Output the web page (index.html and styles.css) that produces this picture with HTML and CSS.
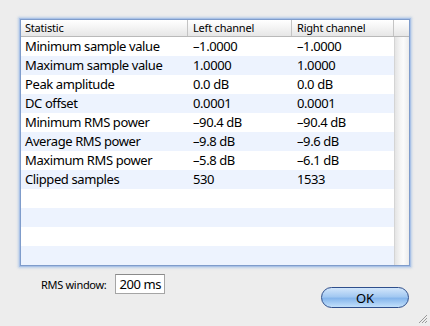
FILE: index.html
```html
<!DOCTYPE html>
<html lang="en">
<head>
  <meta charset="UTF-8">
  <title>Statistics</title>
  <link rel="stylesheet" href="styles.css">
</head>
<body>
  <div class="dialog">
    <div class="frame">
      <div class="head">
        <div class="hcell">Statistic</div>
        <div class="hcell">Left channel</div>
        <div class="hcell">Right channel</div>
        <div class="hcell"></div>
      </div>
      <div class="body">
        <div class="rows">
          <div class="row"><span>Minimum sample value</span><span>–1.0000</span><span>–1.0000</span></div>
          <div class="row"><span>Maximum sample value</span><span>1.0000</span><span>1.0000</span></div>
          <div class="row"><span>Peak amplitude</span><span>0.0 dB</span><span>0.0 dB</span></div>
          <div class="row"><span>DC offset</span><span>0.0001</span><span>0.0001</span></div>
          <div class="row"><span>Minimum RMS power</span><span>–90.4 dB</span><span>–90.4 dB</span></div>
          <div class="row"><span>Average RMS power</span><span>–9.8 dB</span><span>–9.6 dB</span></div>
          <div class="row"><span>Maximum RMS power</span><span>–5.8 dB</span><span>–6.1 dB</span></div>
          <div class="row"><span>Clipped samples</span><span>530</span><span>1533</span></div>
          <div class="row"></div>
          <div class="row"></div>
          <div class="row"></div>
          <div class="row"></div>
        </div>
        <div class="scrollbar"></div>
      </div>
    </div>

    <div class="footer">
      <label class="rms">RMS window:
        <span class="field">200 ms</span>
      </label>
      <button class="ok">OK</button>
    </div>

    <svg class="grip" width="12" height="12" viewBox="0 0 12 12">
      <path d="M11 3 L3 11 M11 6 L6 11 M11 9 L9 11" stroke="#9a9a9a" stroke-width="1" fill="none"/>
    </svg>
  </div>
</body>
</html>
```

FILE: styles.css
```css
body {
  margin: 0;
  background: #ededed;
  font-family: "Noto Sans", "DejaVu Sans", sans-serif;
  color: #000;
}

.dialog {
  position: relative;
  width: 430px;
  height: 326px;
  padding: 19px 0 0 20px;
  box-sizing: border-box;
}

.frame {
  width: 390px;
  border: 1px solid #7f9ccb;
  box-shadow: 0 0 0 1px #a9c1e6, 0 0 2px 2px rgba(140, 175, 225, 0.5);
  background: #fff;
  box-sizing: border-box;
}

.head {
  display: grid;
  grid-template-columns: 167px 104px 102px 1fr;
  height: 16px;
  background: linear-gradient(#ffffff, #f3f3f3 50%, #e6e6e6);
  border-bottom: 1px solid #b9b9b9;
}

.hcell {
  font-size: 11px;
  line-height: 16px;
  letter-spacing: -0.2px;
  padding-left: 5px;
  border-right: 1px solid #c4c4c4;
}

.hcell:first-child {
  padding-left: 4px;
}

.hcell:last-child {
  border-right: none;
}

.body {
  display: flex;
}

.rows {
  width: 373px;
}

.row {
  display: grid;
  grid-template-columns: 167px 104px 102px;
  height: 19px;
  font-size: 13px;
  line-height: 19px;
  letter-spacing: -0.4px;
}

.row:nth-child(even) {
  background: #edf3fe;
}

.row span {
  padding-left: 5px;
  white-space: nowrap;
}

.row span:first-child {
  padding-left: 4px;
}

.scrollbar {
  flex: 1;
  background: linear-gradient(90deg, #e4e4e4, #f6f6f6 40%, #fbfbfb 60%, #ececec);
  border-left: 1px solid #d4d4d4;
}

.footer {
  display: flex;
  align-items: flex-start;
  justify-content: space-between;
  width: 390px;
  margin-top: 8px;
}

.rms {
  display: flex;
  align-items: center;
  gap: 8px;
  font-size: 11px;
  letter-spacing: -0.3px;
  margin-left: 21px;
}

.field {
  width: 44px;
  height: 18px;
  border: 1px solid #a5a5a5;
  border-top-color: #8a8a8a;
  background: #fff;
  font-size: 13px;
  line-height: 18px;
  letter-spacing: -0.4px;
  padding-left: 4px;
  box-sizing: content-box;
}

.ok {
  margin-top: 13px;
  margin-right: 1px;
  width: 88px;
  height: 21px;
  border-radius: 11px;
  border: 1px solid #2f4f8c;
  background: linear-gradient(#d2e6fb, #a3c9f2 45%, #86b6ec 55%, #c2e0fb);
  font-family: "Noto Sans", "DejaVu Sans", sans-serif;
  font-size: 13px;
  color: #000;
  padding: 0;
}

.grip {
  position: absolute;
  right: 2px;
  bottom: 2px;
}
```
